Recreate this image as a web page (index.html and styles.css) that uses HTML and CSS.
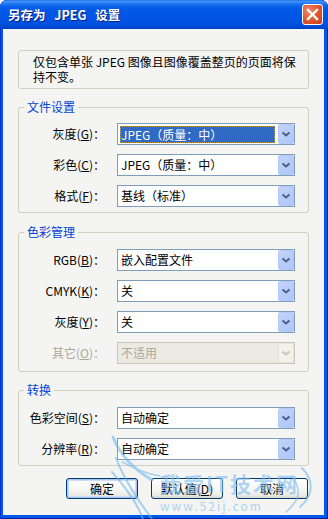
FILE: index.html
```html
<!DOCTYPE html>
<html lang="zh-CN">
<head>
<meta charset="utf-8">
<title>另存为 JPEG 设置</title>
<link rel="stylesheet" href="styles.css">
</head>
<body>
<div class="window">
  <div class="titlebar">
    <span class="title">另存为 JPEG 设置</span>
    <span class="close">
      <svg width="13" height="13" viewBox="0 0 13 13"><path d="M2 2 L11 11 M11 2 L2 11" stroke="#fff" stroke-width="2.4" stroke-linecap="square"/></svg>
    </span>
  </div>
  <div class="client">
    <div class="info">仅包含单张 JPEG 图像且图像覆盖整页的页面将保<br>持不变。</div>

    <fieldset class="group g1">
      <legend>文件设置</legend>
      <div class="rows">
        <div class="row">
          <label class="lbl">灰度(<u>G</u>)：</label>
          <div class="combo"><span class="val sel">JPEG（质量：中）</span><span class="drop"><svg width="16" height="20" viewBox="0 0 16 20"><path d="M4.5 8.5 L8 11.5 L11.5 8.5" fill="none" stroke="#4d6185" stroke-width="2"/></svg></span></div>
        </div>
        <div class="row">
          <label class="lbl">彩色(<u>C</u>)：</label>
          <div class="combo"><span class="val">JPEG（质量：中）</span><span class="drop"><svg width="16" height="20" viewBox="0 0 16 20"><path d="M4.5 8.5 L8 11.5 L11.5 8.5" fill="none" stroke="#4d6185" stroke-width="2"/></svg></span></div>
        </div>
        <div class="row">
          <label class="lbl">格式(<u>F</u>)：</label>
          <div class="combo"><span class="val">基线（标准）</span><span class="drop"><svg width="16" height="20" viewBox="0 0 16 20"><path d="M4.5 8.5 L8 11.5 L11.5 8.5" fill="none" stroke="#4d6185" stroke-width="2"/></svg></span></div>
        </div>
      </div>
    </fieldset>

    <fieldset class="group g2">
      <legend>色彩管理</legend>
      <div class="rows">
        <div class="row">
          <label class="lbl">RGB(<u>B</u>)：</label>
          <div class="combo"><span class="val">嵌入配置文件</span><span class="drop"><svg width="16" height="20" viewBox="0 0 16 20"><path d="M4.5 8.5 L8 11.5 L11.5 8.5" fill="none" stroke="#4d6185" stroke-width="2"/></svg></span></div>
        </div>
        <div class="row">
          <label class="lbl">CMYK(<u>K</u>)：</label>
          <div class="combo"><span class="val">关</span><span class="drop"><svg width="16" height="20" viewBox="0 0 16 20"><path d="M4.5 8.5 L8 11.5 L11.5 8.5" fill="none" stroke="#4d6185" stroke-width="2"/></svg></span></div>
        </div>
        <div class="row">
          <label class="lbl">灰度(<u>Y</u>)：</label>
          <div class="combo"><span class="val">关</span><span class="drop"><svg width="16" height="20" viewBox="0 0 16 20"><path d="M4.5 8.5 L8 11.5 L11.5 8.5" fill="none" stroke="#4d6185" stroke-width="2"/></svg></span></div>
        </div>
        <div class="row disabled">
          <label class="lbl">其它(<u>O</u>)：</label>
          <div class="combo"><span class="val">不适用</span><span class="drop"><svg width="16" height="20" viewBox="0 0 16 20"><path d="M4.5 8.5 L8 11.5 L11.5 8.5" fill="none" stroke="#c9c7ba" stroke-width="2"/></svg></span></div>
        </div>
      </div>
    </fieldset>

    <fieldset class="group g3">
      <legend>转换</legend>
      <div class="rows">
        <div class="row">
          <label class="lbl">色彩空间(<u>S</u>)：</label>
          <div class="combo"><span class="val">自动确定</span><span class="drop"><svg width="16" height="20" viewBox="0 0 16 20"><path d="M4.5 8.5 L8 11.5 L11.5 8.5" fill="none" stroke="#4d6185" stroke-width="2"/></svg></span></div>
        </div>
        <div class="row">
          <label class="lbl">分辨率(<u>R</u>)：</label>
          <div class="combo"><span class="val">自动确定</span><span class="drop"><svg width="16" height="20" viewBox="0 0 16 20"><path d="M4.5 8.5 L8 11.5 L11.5 8.5" fill="none" stroke="#4d6185" stroke-width="2"/></svg></span></div>
        </div>
      </div>
    </fieldset>

    <div class="buttons">
      <button class="btn default">确定</button>
      <button class="btn">默认值(<u>D</u>)</button>
      <button class="btn">取消</button>
    </div>
  </div>

  <svg class="swoosh" width="228" height="89" viewBox="100 430 228 89">
    <g fill="none" stroke="#6ab4ec" stroke-linecap="round">
      <path d="M113 437 C120 455 135 470 152 480" stroke-width="3"/>
      <path d="M116 458 C124 480 138 500 152 519" stroke-width="2"/>
      <path d="M112 472 C128 490 138 505 143 519" stroke-width="2"/>
      <path d="M122 462 C134 468 146 474 160 476" stroke-width="1.5"/>
      <path d="M302 468 C314 480 314 495 300 507" stroke-width="2"/>
      <path d="M292 476 C302 490 300 500 286 512" stroke-width="1.5"/>
    </g>
  </svg>
  <div class="watermark">
    <span class="wm-big">我爱IT技术网</span>
    <span class="wm-small">www.52ij.com</span>
  </div>
</div>
</body>
</html>
```

FILE: styles.css
```css
html, body {
  margin: 0;
  padding: 0;
  background: #ffffff;
}

body {
  font-family: "Noto Sans CJK SC", "Liberation Sans", sans-serif;
  font-size: 12px;
  color: #000;
}

.window {
  position: relative;
  width: 328px;
  height: 519px;
  box-sizing: border-box;
  padding: 0 4px 4px 3px;
  display: flex;
  flex-direction: column;
  background: #0058e8;
  border-radius: 7px 7px 0 0;
  box-shadow: inset 1px 0 #0831d9, inset -1px 0 #001ea0, inset 0 -1px #001ea0;
  overflow: hidden;
}

.titlebar {
  height: 29px;
  margin: 0 -4px 0 -3px;
  padding: 0 5px 0 8px;
  display: flex;
  align-items: center;
  justify-content: space-between;
  border-radius: 7px 7px 0 0;
  background: linear-gradient(to bottom,
    #0a5fe8 0px, #4a9af8 1px, #2a7ff5 3px, #0b63ea 6px,
    #0058e6 10px, #0055e5 18px, #0051dd 24px, #0049d2 27px, #0041c4 29px);
}

.title {
  color: #fff;
  font-weight: bold;
  font-size: 12.5px;
  word-spacing: 6px;
  text-shadow: 1px 1px 0 #0a1c8a;
  line-height: 14px;
}

.close {
  width: 21px;
  height: 21px;
  box-sizing: border-box;
  border: 1px solid #fff;
  border-radius: 3px;
  display: flex;
  align-items: center;
  justify-content: center;
  background: radial-gradient(circle at 30% 30%, #f08a66 0%, #e25a32 45%, #c8401c 100%);
}

.client {
  flex: 1;
  background: #f4f4f3;
  padding: 0 15px;
  display: flex;
  flex-direction: column;
}

.info {
  margin-top: 21px;
  height: 39px;
  box-sizing: border-box;
  border: 1px solid #d0d0bf;
  border-radius: 3px;
  padding: 3px 0 0 14px;
  line-height: 15px;
}

.group {
  margin: 0;
  padding: 10px 0 5px 0;
  border: 1px solid #d0d0bf;
  border-radius: 3px;
  min-width: 0;
}

.g1 { margin-top: 12px; }
.g2 { margin-top: 13px; padding-top: 11px; padding-bottom: 7px; }
.g3 { margin-top: 12px; padding-top: 11px; padding-bottom: 5px; }

.group legend {
  margin-left: 5px;
  padding: 0 3px;
  line-height: 12px;
  color: #0046d5;
}

.rows {
  display: flex;
  flex-direction: column;
  gap: 9px;
}

.row {
  display: grid;
  grid-template-columns: 86px 178px;
  column-gap: 12px;
  align-items: center;
}

.lbl {
  text-align: right;
  white-space: nowrap;
  line-height: 22px;
}

.combo {
  height: 22px;
  box-sizing: border-box;
  border: 1px solid #7f9db9;
  background: #fff;
  display: flex;
  align-items: stretch;
}

.val {
  flex: 1;
  padding-left: 3px;
  line-height: 20px;
  white-space: nowrap;
  overflow: hidden;
}

.val.sel {
  margin: 2px 3px 1px 2px;
  padding-left: 1px;
  line-height: 17px;
  background: #316ac5;
  color: #fff;
  outline: 1px dotted #c8a040;
  outline-offset: -1px;
}

.drop {
  width: 16px;
  height: 20px;
  box-sizing: border-box;
  border: 1px solid #b4c8f5;
  border-radius: 2px;
  background: linear-gradient(135deg, #c4d4fb 0%, #b6cbf9 60%, #aec6fa 100%);
  display: block;
}

.drop svg { display: block; margin: -1px; }

.disabled .lbl { color: #aca899; }
.disabled .combo { border-color: #c9c7ba; background: #ebebe4; }
.disabled .val { color: #aca899; }
.disabled .drop { border-color: #e6e4da; background: #f2f1ea; }

.buttons {
  margin-top: 12px;
  margin-right: 1px;
  display: flex;
  justify-content: flex-end;
  gap: 13px;
}

.btn {
  width: 72px;
  height: 21px;
  box-sizing: border-box;
  padding: 0;
  font-family: inherit;
  font-size: 12px;
  line-height: 17px;
  color: #000;
  border: 1px solid #003c74;
  border-radius: 3px;
  background: linear-gradient(to bottom, #ffffff 0%, #f7f7f4 50%, #ecebe6 85%, #d8d4cb 100%);
}

.btn.default {
  box-shadow: inset 0 0 0 1px #a8c4ef, inset 0 0 0 2px #cadcf7;
}

.swoosh {
  position: absolute;
  left: 100px;
  top: 430px;
  opacity: 0.55;
  pointer-events: none;
}

.watermark {
  position: absolute;
  left: 160px;
  top: 470px;
  display: flex;
  flex-direction: column;
  white-space: nowrap;
  pointer-events: none;
  color: #7fbdf0;
  opacity: 0.6;
}

.wm-big {
  font-size: 21px;
  font-weight: bold;
  letter-spacing: 2px;
  line-height: 26px;
}

.wm-small {
  font-size: 12px;
  letter-spacing: 2px;
  line-height: 14px;
  margin-top: 3px;
}
```
